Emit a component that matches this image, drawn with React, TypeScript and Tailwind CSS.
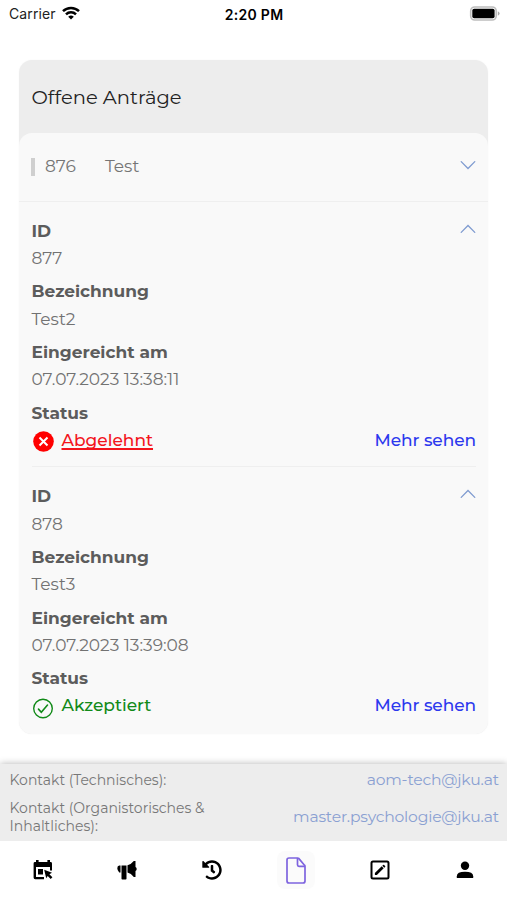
import type { ReactNode } from "react";
import { FaHistory } from "react-icons/fa";

type Status = "rejected" | "accepted";

interface Application {
  id: string;
  name: string;
  submitted: string;
  status: Status;
}

const applications: Application[] = [
  { id: "877", name: "Test2", submitted: "07.07.2023 13:38:11", status: "rejected" },
  { id: "878", name: "Test3", submitted: "07.07.2023 13:39:08", status: "accepted" },
];

function StatusBar() {
  return (
    <header className="grid h-7 grid-cols-3 items-center pr-[7px] pl-[9px] font-[Inter,sans-serif] text-[14px] text-black">
      <div className="-mt-px flex items-center gap-[6px]">
        <span className="tracking-[0.1px] text-[#222]">Carrier</span>
        <svg className="-mt-[1px]" width="18" height="14" viewBox="0 0 18 14" fill="none" stroke="#000" strokeWidth="2.500">
          <path d="M1 5.200a11.400 11.400 0 0 1 16 0" />
          <path d="M4 8.400a7.100 7.100 0 0 1 10 0" />
          <path d="M9 13.600 6.200 10.800a4 4 0 0 1 5.600 0Z" fill="#000" stroke="none" />
        </svg>
      </div>
      <span className="-ml-px text-center text-[14px] font-semibold tracking-[0.300px]">2:20 PM</span>
      <svg className="-mt-[2px] justify-self-end" width="31" height="15" viewBox="0 0 31 15">
        <rect x="1.700" y="1" width="25.500" height="13" rx="4" fill="#fff" stroke="#bdbdbd" strokeWidth="1.600" />
        <rect x="3.300" y="2.700" width="22.300" height="9.500" rx="1.800" fill="#000" />
        <path d="M28.800 5.200q1.800.8 1.800 2.300t-1.800 2.300Z" fill="#aaa" />
      </svg>
    </header>
  );
}

function Chevron({ up = false }: { up?: boolean }) {
  return (
    <svg width="16" height="10" viewBox="0 0 16 10" fill="none" stroke="#7f9bd0" strokeWidth="1.300" strokeLinecap="round">
      <path d={up ? "M1.200 8.400 8 1.500l6.800 6.900" : "M1.200 1.600 8 8.500l6.800-6.900"} />
    </svg>
  );
}

function Label({ children }: { children: ReactNode }) {
  return <dt className="h-[27.35px] text-[17px] leading-[27px] font-bold text-[#5c5c5c]">{children}</dt>;
}

function Value({ children }: { children: ReactNode }) {
  return <dd className="mb-[6px] h-[27.35px] text-[17px] leading-[27px] text-[#727272]">{children}</dd>;
}

function StatusBadge({ status }: { status: Status }) {
  if (status === "rejected") {
    return (
      <div className="flex items-center gap-2 pl-px text-[#f3141c]">
        <svg className="mt-[2px]" width="21" height="21" viewBox="0 0 21 21">
          <circle cx="10.500" cy="10.500" r="10.300" fill="#f00" />
          <path d="m6.500 6.500 8 8m0-8-8 8" stroke="#fff" strokeWidth="2" />
        </svg>
        <span className="text-[17px] font-medium underline decoration-[1.500px] underline-offset-[2px] [text-decoration-skip-ink:none]">Abgelehnt</span>
      </div>
    );
  }
  return (
    <div className="flex items-center gap-[9px] pl-px text-[#118a18]">
      <svg className="mt-[4px]" width="20" height="21" viewBox="0 0 20 21" fill="none" stroke="currentColor">
        <circle cx="10" cy="10.500" r="9.300" strokeWidth="1.400" />
        <path d="m5.500 11.100 2.800 3.100 6.200-7.200" strokeWidth="1.600" strokeLinecap="round" />
      </svg>
      <span className="text-[17px] font-medium">Akzeptiert</span>
    </div>
  );
}

function ApplicationDetails({ item }: { item: Application }) {
  return (
    <li className="border-t border-[#efefef] pt-[15.700px] pb-[12.400px] first:border-transparent last:pb-[14px]">
      <div className="flex items-start justify-between">
        <dl>
          <Label>ID</Label>
          <Value>{item.id}</Value>
          <Label>Bezeichnung</Label>
          <Value>{item.name}</Value>
          <Label>Eingereicht am</Label>
          <Value>{item.submitted}</Value>
          <Label>Status</Label>
        </dl>
        <div className="pt-[6px]">
          <Chevron up />
        </div>
      </div>
      <div className="flex h-[27px] items-center justify-between">
        <StatusBadge status={item.status} />
        <span className="text-[17px] font-medium tracking-[-0.080px] text-[#2c38ee]">Mehr sehen</span>
      </div>
    </li>
  );
}

function Contacts() {
  return (
    <section className="flex h-[77px] flex-col bg-[#ededed] pt-[7px] pr-[8px] pl-[9.500px] text-[14px] leading-[18px] text-[#777] shadow-[0_0_7px_rgba(0,0,0,0.3)]">
      <div className="flex items-center justify-between">
        <span>Kontakt (Technisches):</span>
        <span className="text-[15.600px] tracking-[-0.200px] text-[#8aa0d2]">aom-tech@jku.at</span>
      </div>
      <div className="mt-[10px] flex items-center justify-between">
        <span>
          Kontakt (Organistorisches &amp;
          <br />
          Inhaltliches):
        </span>
        <span className="text-[15.600px] tracking-[-0.200px] text-[#8aa0d2]">master.psychologie@jku.at</span>
      </div>
    </section>
  );
}

function NavItem({ children, active = false }: { children: ReactNode; active?: boolean }) {
  return (
    <div className="flex flex-1 justify-center">
      <span className={`flex h-[38px] w-[38px] items-center justify-center rounded-lg ${active ? "bg-[#fbfbfb]" : ""}`}>{children}</span>
    </div>
  );
}

function BottomNav() {
  return (
    <nav className="relative flex h-[59px] items-center bg-white pb-px pl-px text-black">
      <NavItem>
        <svg width="20" height="22" viewBox="0 0 20 22">
          <path d="M3 1h2.600v2h8.800V1H17v2h.6q1.400 0 1.400 1.400V11.500h-2V8H3V18h8v2.200H2.200Q.6 20.200.6 18.600V4.400Q.6 3 2 3h1Z" />
          <path d="M5 10h5v5.500H5z" />
          <path d="m11.200 10.800 7.800 3-2.600 1.500 3 3-1.700 1.700-3-3-1.500 2.300Z" />
        </svg>
      </NavItem>
      <NavItem>
        <svg width="20" height="20" viewBox="0 0 20 20">
          <path d="M3.500 5.600v6.800H2.200Q.3 10.600.3 8.200q0-2.200 2-2.600ZM4.500 5.400h5v13.400q0 .8-.8.800H5.300q-.8 0-.8-.8ZM10.500 5.200q3.600-.9 6.300-4.300h1.700v6.200q1.200.5 1.200 1.900t-1.200 1.900v6.200h-1.700q-2.700-3.600-6.300-4.500Z" />
        </svg>
      </NavItem>
      <NavItem>
        <FaHistory size={20} />
      </NavItem>
      <NavItem active>
        <svg width="20" height="27" viewBox="0 0 20 27" fill="none" stroke="#7e64df" strokeWidth="1.700" strokeLinejoin="round">
          <path d="M3 1h8.700q.6 0 1 .4L18.500 8.200q.5.500.5 1.100V24q0 2-2 2H3q-2 0-2-2V3q0-2 2-2Z" />
          <path d="M11.500 1v6.800q0 1.500 1.500 1.500h6" />
        </svg>
      </NavItem>
      <NavItem>
        <svg width="20" height="20" viewBox="0 0 20 20">
          <rect x="1.500" y="1.500" width="17" height="17" rx="1.500" fill="none" stroke="currentColor" strokeWidth="2" />
          <path d="m4.900 13.100 6.800-6.800 2 2L6.900 15.100h-2ZM12.300 5.700l.8-.8q.5-.5 1 0l1 1q.5.500 0 1l-.8.8Z" />
        </svg>
      </NavItem>
      <NavItem>
        <svg width="18" height="18" viewBox="0 0 18 18">
          <circle cx="9" cy="4.800" r="4.200" />
          <path d="M.8 17v-1.800Q.8 10.800 9 10.800t8.200 4.400V17Z" />
        </svg>
      </NavItem>
    </nav>
  );
}

export default function App() {
  return (
    <div className="flex h-[900px] w-[507px] flex-col overflow-hidden bg-white font-[Montserrat,Inter,sans-serif]">
      <StatusBar />
      <main className="flex-1 px-[19px] pt-8">
        <section className="overflow-hidden rounded-[13px] bg-[#ededed] shadow-[0_0_2px_rgba(0,0,0,0.04)]">
          <h1 className="h-[73px] pl-[12.500px] text-[19.500px] leading-[74px] text-[#222]">Offene Anträge</h1>
          <div className="overflow-hidden rounded-t-[13px] bg-[#f9f9f9]">
            <div className="flex h-[69px] items-center border-b border-[#efefef] pr-[12px] pl-[12px] text-[17px] text-[#757575]">
              <span className="mr-[10px] h-[18px] w-[4px] bg-[#cfcfcf]" />
              <span className="w-[60px]">876</span>
              <span className="flex-1">Test</span>
              <span className="-mt-[4px]">
                <Chevron />
              </span>
            </div>
            <ul className="-mt-px pr-[12px] pl-[12.500px]">
              {applications.map((item) => (
                <ApplicationDetails key={item.id} item={item} />
              ))}
            </ul>
          </div>
        </section>
      </main>
      <Contacts />
      <BottomNav />
    </div>
  );
}
